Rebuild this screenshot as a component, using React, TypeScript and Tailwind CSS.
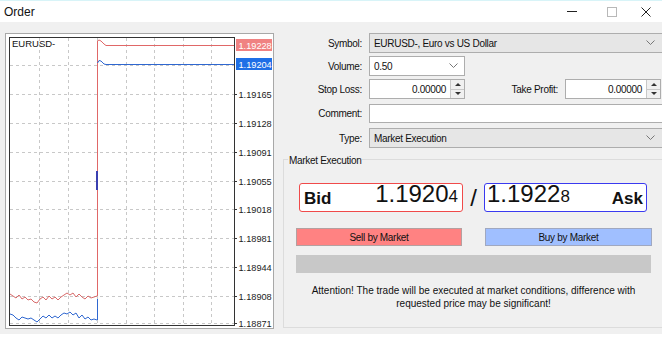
import React from 'react'

const font = { fontFamily: '"Liberation Sans", Arial, sans-serif' }

// bottom-left tick noise, page coordinates
const redNoise = [
  [10, 294], [13, 296], [16, 298], [19, 295], [22, 299], [25, 297], [28, 300], [31, 299], [34, 302], [37, 303],
  [40, 299], [43, 297], [46, 300], [49, 296], [52, 299], [55, 297], [58, 300], [61, 297], [64, 295], [67, 293],
  [70, 295], [73, 293], [76, 297], [79, 294], [82, 297], [85, 299], [88, 296], [91, 298], [94, 297], [97, 296],
]
const blueNoise = [
  [10, 314], [13, 315], [16, 318], [19, 320], [22, 317], [25, 318], [28, 319], [31, 318], [34, 320], [37, 322],
  [40, 319], [43, 316], [46, 318], [49, 315], [52, 318], [55, 316], [58, 318], [61, 315], [64, 313], [67, 314],
  [70, 312], [73, 315], [76, 313], [79, 318], [82, 315], [85, 319], [88, 317], [91, 320], [94, 319], [97, 320],
]

const gridX = [39, 68, 126, 154, 183, 211]
const levels: [string, number][] = [
  ['1.19165', 94],
  ['1.19128', 123],
  ['1.19091', 152],
  ['1.19055', 181],
  ['1.19018', 209],
  ['1.18981', 238],
  ['1.18944', 267],
  ['1.18908', 296],
  ['1.18871', 323],
]

// small windows-dialog text
const ui = 'text-[10px] tracking-[-0.3px] text-[#111]'

function Chart() {
  const pts = (a: number[][]) => a.map((p) => p.join(',')).join(' ')
  return (
    <div className="w-[269px] h-[296px] border border-[#a8a8a8] bg-white">
      <svg width="267" height="294" viewBox="6 34 267 294" style={font}>
        {gridX.map((x) => (
          <line key={x} x1={x + 0.5} y1={38} x2={x + 0.5} y2={325} stroke="#c8c8c8" strokeDasharray="3 3" />
        ))}
        <line x1={97.5} y1={38} x2={97.5} y2={325} stroke="#c8c8c8" strokeDasharray="3 3" />
        <line x1={10} y1={65.5} x2={234} y2={65.5} stroke="#c8c8c8" strokeDasharray="3 3" />
        {levels.map(([, y]) => (
          <line key={y} x1={10} y1={y + 0.5} x2={234} y2={y + 0.5} stroke="#c8c8c8" strokeDasharray="3 3" />
        ))}
        <rect x={9.5} y={37.5} width={225} height={288} fill="none" stroke="#333" />
        <text x={12} y={47} fontSize="9.5" fill="#111">EURUSD-</text>

        <polyline points={pts(redNoise)} fill="none" stroke="#d86a6a" strokeWidth="1" />
        <polyline points={pts(blueNoise)} fill="none" stroke="#2f67d0" strokeWidth="1" />
        <polyline points="97.5,296 97.5,41 99,40 101,41 104,44 106,45.5 234,45.5" fill="none" stroke="#e06767" />
        <polyline points="97.5,63 99,60.5 101,61 104,64 106,64.5 234,64.5" fill="none" stroke="#2f67d0" />
        <line x1={97.5} y1={299} x2={97.5} y2={320} stroke="#2f67d0" />
        <line x1={97} y1={171} x2={97} y2={190} stroke="#3a3fb0" strokeWidth="2" />

        {levels.map(([t, y]) => (
          <g key={t}>
            <line x1={234} y1={y + 0.5} x2={237} y2={y + 0.5} stroke="#333" />
            <text x={238.5} y={y + 4} fontSize="9.2" fill="#222">{t}</text>
          </g>
        ))}
        <rect x={236} y={39} width={36} height={12} fill="#f08282" />
        <text x={238.5} y={48.5} fontSize="9.2" fill="#fff">1.19228</text>
        <rect x={236} y={58} width={36} height={12} fill="#1e6fe6" />
        <text x={238.5} y={67.5} fontSize="9.2" fill="#fff">1.19204</text>
      </svg>
    </div>
  )
}

function Chevron() {
  return (
    <svg width="9" height="6" viewBox="0 0 9 6" className="shrink-0">
      <path d="M0.5 0.5 L4.5 4.5 L8.5 0.5" fill="none" stroke="#777" />
    </svg>
  )
}

function Spin() {
  return (
    <div className="w-[14px] h-full flex flex-col border-l border-[#c8c8c8] bg-[#f0f0f0]">
      <div className="flex-1 flex items-center justify-center border-b border-[#c8c8c8]">
        <div className="w-0 h-0 border-x-[3px] border-x-transparent border-b-[3px] border-b-[#333]" />
      </div>
      <div className="flex-1 flex items-center justify-center">
        <div className="w-0 h-0 border-x-[3px] border-x-transparent border-t-[3px] border-t-[#333]" />
      </div>
    </div>
  )
}

function Label({ children, w = 'w-[86px]' }: { children: React.ReactNode; w?: string }) {
  return <div className={`${w} text-right pr-[7px] ${ui}`}>{children}</div>
}

function Select({ value }: { value: string }) {
  return (
    <div className={`flex-1 h-[20px] flex items-center justify-between pl-[4px] pr-[7px] bg-[#e6e6e6] border border-[#adadad] ${ui}`}>
      <span>{value}</span>
      <Chevron />
    </div>
  )
}

function SpinInput({ value }: { value: string }) {
  return (
    <div className={`w-[96px] h-[20px] flex items-stretch bg-white border border-[#adadad] ${ui}`}>
      <div className="flex-1 flex items-center justify-end pr-[4px]">{value}</div>
      <Spin />
    </div>
  )
}

function OrderForm() {
  return (
    <div className="flex flex-col pt-[11px]">
      <div className="flex items-center h-[20px]">
        <Label>Symbol:</Label>
        <Select value="EURUSD-, Euro vs US Dollar" />
        <div className="w-[2px]" />
      </div>
      <div className="flex items-center h-[20px] mt-[3px]">
        <Label>Volume:</Label>
        <div className={`w-[96px] h-[20px] flex items-center justify-between pl-[4px] pr-[6px] bg-white border border-[#adadad] ${ui}`}>
          <span>0.50</span>
          <Chevron />
        </div>
      </div>
      <div className="flex items-center h-[20px] mt-[3px]">
        <Label>Stop Loss:</Label>
        <SpinInput value="0.00000" />
        <Label w="w-[100px]">Take Profit:</Label>
        <SpinInput value="0.00000" />
      </div>
      <div className="flex items-center h-[19px] mt-[5px]">
        <Label>Comment:</Label>
        <div className="flex-1 h-[19px] bg-white border border-[#adadad]" />
        <div className="w-[2px]" />
      </div>
      <div className="flex items-center h-[20px] mt-[5px]">
        <Label>Type:</Label>
        <Select value="Market Execution" />
        <div className="w-[2px]" />
      </div>
    </div>
  )
}

function Execution() {
  return (
    <div className="relative mt-[11px] w-[382px] h-[169px] border border-[#dcdcdc] px-[12px] pt-[23px]">
      <div className={`absolute left-[4px] top-[-7px] bg-[#f0f0f0] px-[1px] ${ui}`}>Market Execution</div>
      <div className="flex items-center pl-[3px]">
        <div className="w-[164px] h-[29px] flex items-end justify-between rounded-[3px] border border-[#f04a4a] bg-white px-[4px] pb-[1px]">
          <span className="text-[17px] font-bold leading-[22px] text-[#111]">Bid</span>
          <span className="leading-[26px] text-[#111]">
            <span className="text-[24px]">1.1920</span>
            <span className="text-[17px]">4</span>
          </span>
        </div>
        <div className="w-[21px] text-center text-[24px] leading-[26px] text-[#111]">/</div>
        <div className="w-[163px] h-[29px] flex items-end justify-between rounded-[3px] border border-[#3a3af0] bg-white px-[2px] pb-[1px]">
          <span className="leading-[26px] text-[#111]">
            <span className="text-[24px]">1.1922</span>
            <span className="text-[17px]">8</span>
          </span>
          <span className="text-[17px] font-bold leading-[22px] text-[#111] pr-[1px]">Ask</span>
        </div>
      </div>
      <div className="flex justify-between mt-[16px]">
        <div className={`w-[166px] h-[18px] flex items-center justify-center bg-[#ff8282] border border-[#b4a0a0] ${ui}`}>
          Sell by Market
        </div>
        <div className={`w-[167px] h-[18px] flex items-center justify-center bg-[#a0bfff] border border-[#a0a8c0] ${ui}`}>
          Buy by Market
        </div>
      </div>
      <div className="mt-[9px] w-[355px] h-[18px] bg-[#c8c8c8]" />
      <div className="mt-[11px] w-[355px] text-center leading-[13px] text-[10px] text-[#111]">
        Attention! The trade will be executed at market conditions, difference with
        <br />
        requested price may be significant!
      </div>
    </div>
  )
}

export default function App() {
  return (
    <div className="w-[662px] h-[345px] overflow-hidden bg-white flex flex-col" style={font}>
      <div className="h-[22px] shrink-0 flex items-center justify-between border-t border-[#d8f4f8] pl-[4px]">
        <span className="text-[12px] text-[#111]">Order</span>
        <div className="flex items-center h-full">
          <div className="w-[40px] flex justify-center">
            <div className="w-[10px] h-px bg-[#222]" />
          </div>
          <div className="w-[40px] flex justify-center">
            <div className="w-[10px] h-[10px] border border-[#b8b8b8]" />
          </div>
          <div className="w-[30px] flex justify-center pr-[2px]">
            <svg width="10" height="10" viewBox="0 0 10 10">
              <path d="M0.5 0.5 L9.5 9.5 M9.5 0.5 L0.5 9.5" stroke="#222" />
            </svg>
          </div>
        </div>
      </div>
      <div className="h-[312px] shrink-0 bg-[#f0f0f0] flex">
        <div className="pl-[5px] pt-[11px]">
          <Chart />
        </div>
        <div className="ml-[9px] flex flex-col">
          <OrderForm />
          <Execution />
        </div>
      </div>
    </div>
  )
}
